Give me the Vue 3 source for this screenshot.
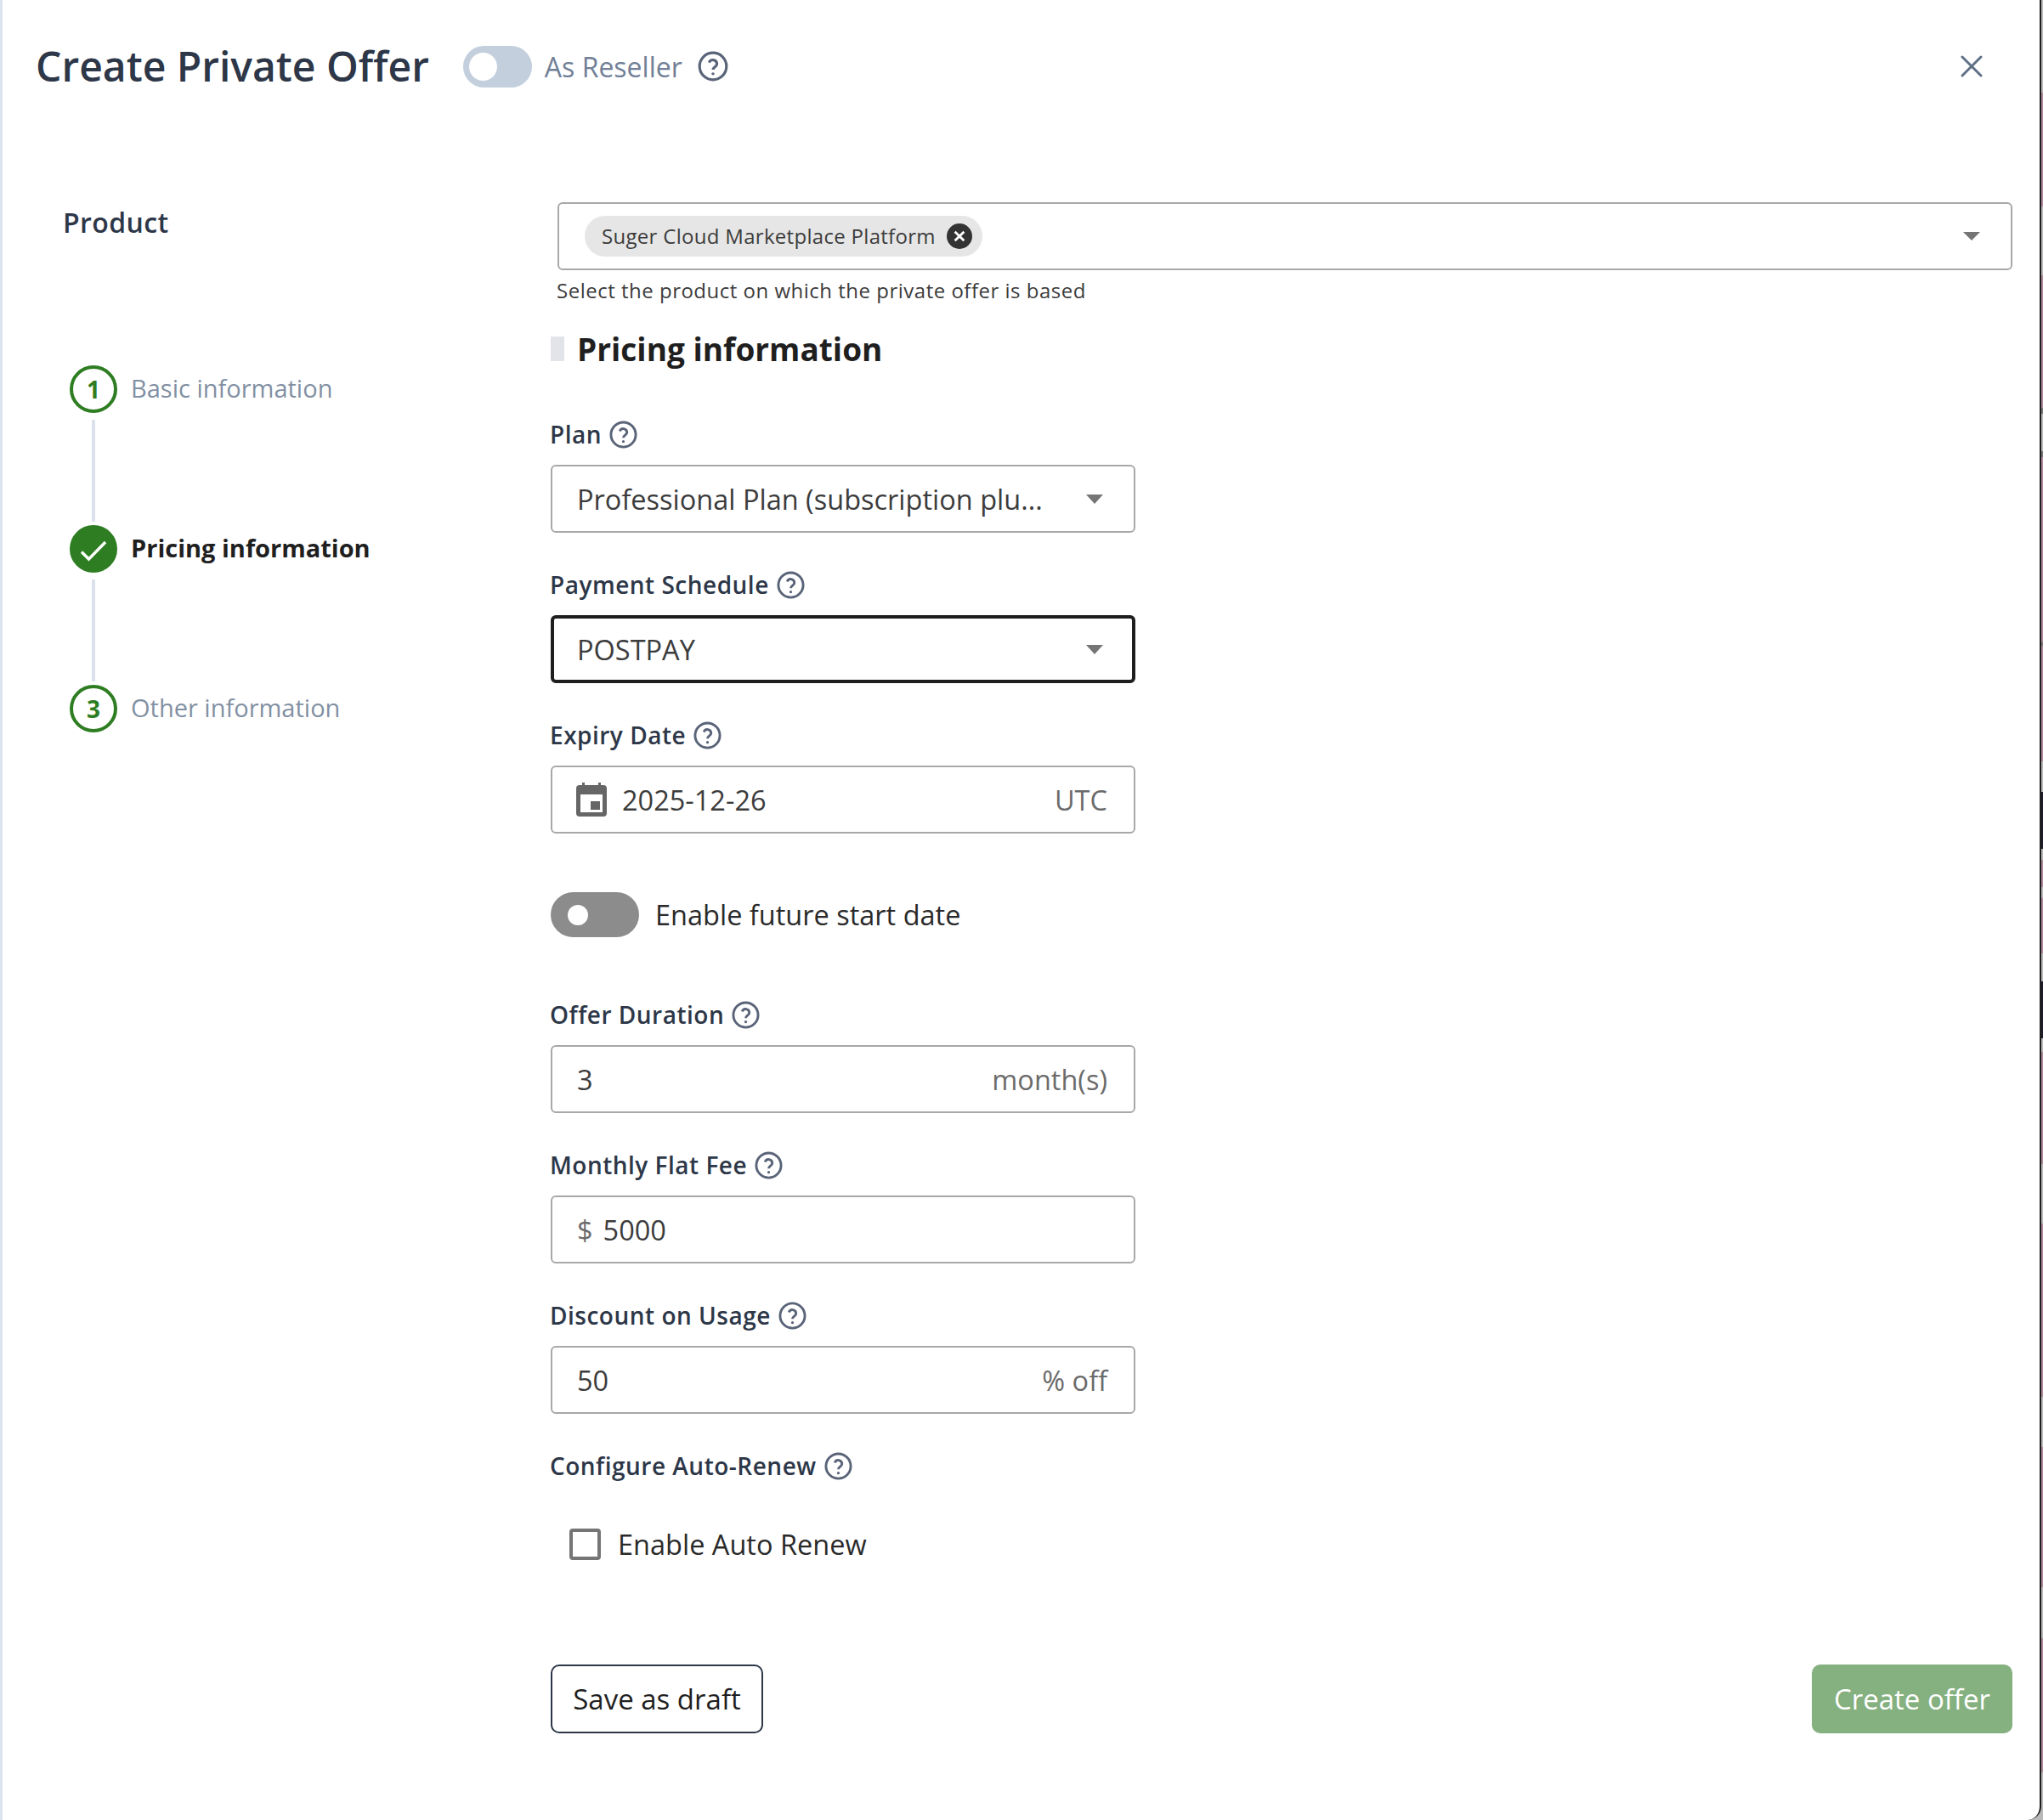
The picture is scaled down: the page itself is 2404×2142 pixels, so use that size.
<script setup>
const fields = [
  { key: 'plan', label: 'Plan', type: 'select', value: 'Professional Plan (subscription plu...' },
  { key: 'pay', label: 'Payment Schedule', type: 'select', value: 'POSTPAY', focus: true },
  { key: 'date', label: 'Expiry Date', type: 'date', value: '2025-12-26', suffix: 'UTC' },
]
const fields2 = [
  { key: 'dur', label: 'Offer Duration', value: '3', suffix: 'month(s)' },
  { key: 'fee', label: 'Monthly Flat Fee', value: '5000', prefix: '$' },
  { key: 'disc', label: 'Discount on Usage', value: '50', suffix: '% off' },
]
const steps = [
  { n: '1', label: 'Basic information' },
  { n: '2', label: 'Pricing information', active: true },
  { n: '3', label: 'Other information' },
]
</script>

<template>
  <div class="page">
    <div class="modal">
      <header class="head">
        <h1 class="title">Create Private Offer</h1>
        <span class="switch"><span class="knob"></span></span>
        <span class="reseller">As Reseller</span>
        <svg class="help big" viewBox="0 0 24 24"><circle cx="12" cy="12" r="10" /><path d="M9.1 9.2a3 3 0 0 1 5.8 1c0 2-2.9 2.4-2.9 4.3" /><circle class="dot" cx="12" cy="17.6" r="1.1" /></svg>
        <svg class="close" viewBox="0 0 26 26"><path d="M2 2l22 22M24 2L2 24" /></svg>
      </header>

      <div class="body">
        <aside class="side">
          <div class="product-label">Product</div>
          <ol class="steps">
            <li v-for="(s, i) in steps" :key="s.n" class="step">
              <div class="step-row">
                <span class="bullet" :class="{ on: s.active }">
                  <svg v-if="s.active" viewBox="0 0 30 24"><path d="M1 12.5l8.5 8.5L29 1" /></svg>
                  <template v-else>{{ s.n }}</template>
                </span>
                <span class="step-text" :class="{ on: s.active }">{{ s.label }}</span>
              </div>
              <div v-if="i < steps.length - 1" class="rail"></div>
            </li>
          </ol>
        </aside>

        <main class="main">
          <div class="product-box">
            <span class="chip">
              <span class="chip-text">Suger Cloud Marketplace Platform</span>
              <svg class="chip-x" viewBox="0 0 28 28"><circle cx="14" cy="14" r="14" /><path d="M9 9l10 10M19 9L9 19" /></svg>
            </span>
            <span class="caret"></span>
          </div>
          <p class="hint">Select the product on which the private offer is based</p>

          <h2 class="section"><span class="bar"></span>Pricing information</h2>

          <div v-for="f in fields" :key="f.key" class="field">
            <div class="label">{{ f.label }}
              <svg class="help" viewBox="0 0 24 24"><circle cx="12" cy="12" r="10" /><path d="M9.1 9.2a3 3 0 0 1 5.8 1c0 2-2.9 2.4-2.9 4.3" /><circle class="dot" cx="12" cy="17.6" r="1.1" /></svg>
            </div>
            <div class="box" :class="{ focus: f.focus }">
              <svg v-if="f.type === 'date'" class="cal" viewBox="0 0 36 40"><path fill-rule="evenodd" d="M7 0h3v3h16V0h3v3h3a4 4 0 0 1 4 4v29a4 4 0 0 1-4 4H4a4 4 0 0 1-4-4V7a4 4 0 0 1 4-4h3zM5 14v21h26V14z" /><rect x="17" y="22" width="11" height="10" /></svg>
              <span class="val">{{ f.value }}</span>
              <span v-if="f.suffix" class="suffix">{{ f.suffix }}</span>
              <span v-if="f.type === 'select'" class="caret small"></span>
            </div>
          </div>

          <div class="future">
            <span class="switch2"><span class="knob2"></span></span>
            <span class="future-text">Enable future start date</span>
          </div>

          <div v-for="f in fields2" :key="f.key" class="field">
            <div class="label">{{ f.label }}
              <svg class="help" viewBox="0 0 24 24"><circle cx="12" cy="12" r="10" /><path d="M9.1 9.2a3 3 0 0 1 5.8 1c0 2-2.9 2.4-2.9 4.3" /><circle class="dot" cx="12" cy="17.6" r="1.1" /></svg>
            </div>
            <div class="box">
              <span v-if="f.prefix" class="prefix">{{ f.prefix }}</span>
              <span class="val">{{ f.value }}</span>
              <span v-if="f.suffix" class="suffix">{{ f.suffix }}</span>
            </div>
          </div>

          <div class="label">Configure Auto-Renew
            <svg class="help" viewBox="0 0 24 24"><circle cx="12" cy="12" r="10" /><path d="M9.1 9.2a3 3 0 0 1 5.8 1c0 2-2.9 2.4-2.9 4.3" /><circle class="dot" cx="12" cy="17.6" r="1.1" /></svg>
          </div>
          <div class="renew">
            <span class="check"></span>
            <span class="renew-text">Enable Auto Renew</span>
          </div>

          <div class="actions">
            <button class="draft">Save as draft</button>
            <button class="create">Create offer</button>
          </div>
        </main>
      </div>
    </div>
  </div>
</template>

<style>
html, body { margin: 0; background: #fff; }
</style>

<style scoped>
* { box-sizing: border-box; }
.page {
  width: 2404px;
  height: 2142px;
  overflow: hidden;
  background: linear-gradient(to bottom,
    #b9b9b9 0 109px, #b08a9c 109px 243px, #b9b9b9 243px 324px, #b08a9c 324px 480px,
    #777 480px 487px, #b9b9b9 487px 531px, #777 531px 538px, #b08a9c 538px 756px,
    #777 756px 760px, #b08a9c 760px 896px, #b9b9b9 896px 932px, #1c1c2c 932px 999px,
    #b9b9b9 999px 1012px, #b08a9c 1012px 1044px, #b9b9b9 1044px 1057px, #b08a9c 1057px 1122px,
    #b9b9b9 1122px 1155px, #1c1c2c 1155px 1222px, #b9b9b9 1222px 1238px, #b08a9c 1238px 1370px,
    #b9b9b9 1370px 1440px, #b08a9c 1440px 1644px, #b9b9b9 1644px 1703px, #b08a9c 1703px 1868px,
    #b9b9b9 1868px 1928px, #b08a9c 1928px 2086px, #b9b9b9 2086px 2142px);
  font-family: "Open Sans", "Noto Sans", sans-serif;
  color: #2d3748;
}
.modal {
  width: 2402px;
  height: 2142px;
  background: #fff;
  border-left: 3px solid #dbe4f0;
  border-right: 2px solid #1e1e1e;
  border-bottom-right-radius: 16px;
}
.head {
  display: flex;
  align-items: center;
  height: 156px;
  padding: 0 67px 0 39px;
}
.title {
  margin: 0;
  font-size: 48px;
  font-weight: 600;
  color: #2d3748;
  line-height: 64px;
}
.switch {
  width: 81px;
  height: 49px;
  margin-left: 40px;
  border-radius: 25px;
  background: #c3cfdd;
  display: flex;
  align-items: center;
  padding-left: 7px;
  flex: none;
}
.knob { width: 33px; height: 33px; border-radius: 50%; background: #fff; }
.reseller { margin-left: 15px; font-size: 32px; color: #718096; }
.help {
  width: 35px;
  height: 35px;
  fill: none;
  stroke: #5a6478;
  stroke-width: 2;
  flex: none;
  margin-left: -1px;
}
.help .dot { fill: #5a6478; stroke: none; }
.help.big { margin-left: 17px; width: 38px; height: 38px; }
.close {
  margin-left: auto;
  width: 26px;
  height: 26px;
  fill: none;
  stroke: #5f7086;
  stroke-width: 3;
  stroke-linecap: round;
}
.body { display: flex; }
.side { width: 645px; flex: none; padding-left: 71px; }
.product-label {
  font-size: 32px;
  font-weight: 600;
  letter-spacing: .4px;
  line-height: 44px;
  margin-top: 84px;
  color: #2d3748;
}
.steps { list-style: none; margin: 146px 0 0 8px; padding: 0; }
.step-row { display: flex; align-items: center; gap: 16px; }
.bullet {
  width: 56px;
  height: 56px;
  border-radius: 50%;
  border: 4px solid #2e7d22;
  color: #2e7d22;
  font-size: 28px;
  font-weight: 700;
  display: flex;
  align-items: center;
  justify-content: center;
  flex: none;
}
.bullet.on { background: #2e7d22; }
.bullet svg { width: 30px; height: 24px; margin-top: 5px; fill: none; stroke: #fff; stroke-width: 3.4; }
.step-text { font-size: 29px; color: #8290a3; margin-top: -3px; }
.step-text.on { font-weight: 700; color: #1f1f1f; }
.rail { width: 4px; height: 120px; background: #dbe2ee; margin: 8px 0 4px 26px; }
.main { flex: 1; padding-right: 32px; padding-top: 82px; }
.product-box {
  height: 80px;
  margin-left: 8px;
  border: 2px solid #a8a8a8;
  border-radius: 6px;
  display: flex;
  align-items: center;
  padding: 0 36px 0 30px;
}
.chip {
  height: 48px;
  border-radius: 24px;
  background: #e6e6e6;
  display: flex;
  align-items: center;
  padding: 0 12px 0 20px;
  gap: 13px;
  font-size: 24px;
  letter-spacing: .3px;
  color: #3c3c3c;
}
.chip-text { margin-top: -2px; }
.chip-x { width: 30px; height: 30px; fill: #333; stroke: none; }
.chip-x path { fill: none; stroke: #fff; stroke-width: 2.6; }
.caret {
  margin-left: auto;
  width: 0;
  height: 0;
  border-left: 10px solid transparent;
  border-right: 10px solid transparent;
  border-top: 10px solid #757575;
}
.hint {
  margin: 0 0 0 7px;
  padding-top: 8px;
  font-size: 24px;
  letter-spacing: .5px;
  line-height: 32px;
  color: #3c3c3c;
  height: 51px;
}
.section {
  display: flex;
  align-items: center;
  margin: 14px 0 52px;
  height: 54px;
  font-size: 37px;
  font-weight: 700;
  color: #1f1f1f;
}
.bar { width: 16px; height: 29px; background: #e2e4ea; margin-right: 15px; }
.field { width: 688px; }
.label {
  display: flex;
  align-items: center;
  gap: 9px;
  height: 44px;
  margin: 39px 0 14px -1px;
  font-size: 28px;
  font-weight: 600;
  letter-spacing: .5px;
  color: #2d3748;
}
.box {
  height: 80px;
  border: 2px solid #a8a8a8;
  border-radius: 6px;
  display: flex;
  align-items: center;
  padding: 0 31px 0 29px;
  font-size: 32.5px;
  color: #3c3c3c;
}
.box.focus { border: 4px solid #1e1e1e; padding: 0 29px 0 27px; }
.val { white-space: nowrap; }
.suffix { margin-left: auto; color: #6b6b6b; }
.prefix { color: #6b6b6b; margin-right: 12px; }
.caret.small { border-top-width: 11px; margin-right: 5px; }
.cal { width: 36px; height: 40px; fill: #666; margin: 0 18px 0 -1px; flex: none; }
.future { display: flex; align-items: center; height: 53px; margin: 69px 0 69px; gap: 19px; }
.switch2 {
  width: 104px;
  height: 53px;
  border-radius: 27px;
  background: #8c8c8c;
  display: flex;
  align-items: center;
  padding-left: 20px;
  flex: none;
}
.knob2 { width: 24px; height: 24px; border-radius: 50%; background: #fff; }
.future-text { font-size: 32.5px; color: #2a2a2a; }
.renew { display: flex; align-items: center; margin: 50px 0 0 22px; height: 40px; gap: 20px; }
.check { width: 37px; height: 37px; border: 4px solid #757575; border-radius: 4px; flex: none; }
.renew-text { font-size: 32.5px; color: #2a2a2a; }
.actions { display: flex; justify-content: space-between; margin-top: 122px; }
.draft, .create {
  height: 81px;
  border-radius: 10px;
  font-family: inherit;
  font-size: 33px;
}
.draft { width: 250px; background: #fff; border: 2px solid #2d3748; color: #1f1f1f; }
.create { width: 236px; background: #85b07f; border: none; color: #fff; }
</style>
